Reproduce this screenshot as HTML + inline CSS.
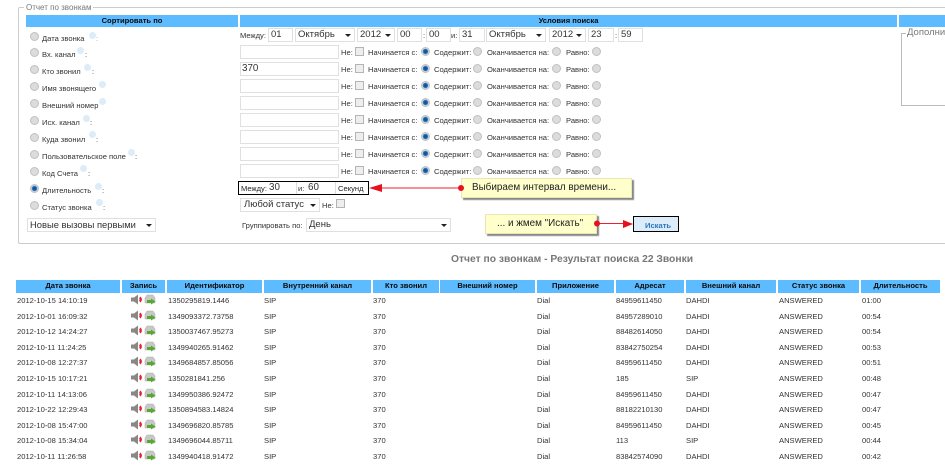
<!DOCTYPE html>
<html><head><meta charset="utf-8"><style>
html,body{margin:0;padding:0;background:#fff}
body{width:945px;height:465px;position:relative;overflow:hidden;font-family:"Liberation Sans",sans-serif;font-size:7.6px;color:#333}
#w{position:absolute;left:0;top:0;width:945px;height:465px;filter:blur(.3px)}
.t{position:absolute;line-height:12px;white-space:nowrap}
.h{position:absolute;background:#5cbcff;color:#0a0a0a;font-weight:bold;text-align:center;font-size:7.6px;line-height:12px;height:12px}
.th{height:13px}
.b{position:absolute;background:#fff;border:1px solid #e0e0e0;box-sizing:border-box;font-size:9.5px;line-height:12px;padding-left:2px;color:#333;white-space:nowrap;overflow:hidden}
.s{height:14px}
.s:after{content:"";position:absolute;right:3px;top:5px;border:3px solid transparent;border-top:3px solid #222;border-bottom:0}
.r{position:absolute;width:7px;height:7px;border-radius:50%;border:1px solid #c0c0c0;background:#dcdcdc;box-sizing:content-box}
.on{background:radial-gradient(circle,#0a4a90 0,#1a66b0 42%,#d0dbe6 62%)}
.c{position:absolute;width:7px;height:7px;border:1px solid #b4b4b4;background:#eee}
.i{position:absolute;width:7px;height:7px;border-radius:50%;background:#dcecf9}
.m{position:absolute}
svg.m[width="26"]{margin-top:-1px}
</style></head><body><div id="w">
<div class="m" style="left:18px;top:7px;width:940px;height:235px;border:1px solid #ccc;border-radius:2px"></div>
<div class="t" style="left:24px;top:2px;background:#fff;padding:0 2px;color:#777;font-size:8px">Отчет по звонкам</div>

<div class="h" style="left:26px;top:15px;width:212px">Сортировать по</div>
<div class="h" style="left:240px;top:15px;width:657px">Условия поиска</div>
<div class="h" style="left:899px;top:15px;width:46px"></div>

<div class="m" style="left:901px;top:33px;width:60px;height:71px;border:1px solid #bbb"></div>
<div class="t" style="left:906px;top:27px;background:#fff;padding:0 1px;color:#777;font-size:9.500px">Дополнит</div>

<i class="r" style="left:30px;top:32px"></i><div class="t" style="left:42px;top:32.500px">Дата звонка</div><i class="i" style="left:88.500px;top:31.500px"></i><div class="t" style="left:96px;top:33px;color:#b88">:</div>
<i class="r" style="left:30px;top:48px"></i><div class="t" style="left:42px;top:48.500px">Вх. канал</div><i class="i" style="left:76.500px;top:46.500px"></i><div class="t" style="left:85px;top:49px">:</div>
<i class="r" style="left:30px;top:65px"></i><div class="t" style="left:42px;top:65.500px">Кто звонил</div><i class="i" style="left:83.500px;top:63.500px"></i><div class="t" style="left:92px;top:66px">:</div>
<i class="r" style="left:30px;top:82px"></i><div class="t" style="left:42px;top:82.500px">Имя звонящего</div><i class="i" style="left:98.500px;top:80.500px"></i>
<i class="r" style="left:30px;top:99px"></i><div class="t" style="left:42px;top:99.500px">Внешний номер</div><i class="i" style="left:98.500px;top:97.500px"></i>
<i class="r" style="left:30px;top:116px"></i><div class="t" style="left:42px;top:116.500px">Исх. канал</div><i class="i" style="left:82.500px;top:114.500px"></i><div class="t" style="left:90px;top:117px">:</div>
<i class="r" style="left:30px;top:133px"></i><div class="t" style="left:42px;top:133.500px">Куда звонил</div><i class="i" style="left:88.500px;top:130.500px"></i><div class="t" style="left:96px;top:134px">:</div>
<i class="r" style="left:30px;top:150px"></i><div class="t" style="left:42px;top:151px">Пользовательское поле</div><i class="i" style="left:127.500px;top:148.500px"></i><div class="t" style="left:135px;top:151px">:</div>
<i class="r" style="left:30px;top:167px"></i><div class="t" style="left:42px;top:167.500px">Код Счета</div><i class="i" style="left:79.500px;top:164.500px"></i><div class="t" style="left:88px;top:168px">:</div>
<i class="r on" style="left:30px;top:184px"></i><div class="t" style="left:42px;top:185px">Длительность</div><i class="i" style="left:94.500px;top:182.500px"></i><div class="t" style="left:102px;top:185px">:</div>
<i class="r" style="left:30px;top:201px"></i><div class="t" style="left:42px;top:201.500px">Статус звонка</div><i class="i" style="left:95.500px;top:198.500px"></i><div class="t" style="left:103px;top:202px">:</div>

<!-- date row -->
<div class="t" style="left:240px;top:30px">Между:</div>
<div class="b" style="left:268px;top:28px;width:25px;height:14px">01</div>
<div class="b s" style="left:295px;top:28px;width:60px">Октябрь</div>
<div class="b s" style="left:357px;top:28px;width:38px">2012</div>
<div class="b" style="left:397px;top:28px;width:25px;height:14px">00</div>
<div class="t" style="left:423px;top:30px">:</div>
<div class="b" style="left:426px;top:28px;width:25px;height:14px">00</div>
<div class="t" style="left:451px;top:30px">и:</div>
<div class="b" style="left:459px;top:28px;width:26px;height:14px">31</div>
<div class="b s" style="left:486px;top:28px;width:60px">Октябрь</div>
<div class="b s" style="left:549px;top:28px;width:37px">2012</div>
<div class="b" style="left:588px;top:28px;width:26px;height:14px">23</div>
<div class="t" style="left:615px;top:30px">:</div>
<div class="b" style="left:618px;top:28px;width:25px;height:14px">59</div>

<!-- inputs -->
<div class="b" style="left:240px;top:45px;width:99px;height:14px"></div>
<div class="b" style="left:240px;top:62px;width:99px;height:14px;padding-left:1px;font-size:9.800px">370</div>
<div class="b" style="left:240px;top:79px;width:99px;height:14px"></div>
<div class="b" style="left:240px;top:96px;width:99px;height:14px"></div>
<div class="b" style="left:240px;top:113px;width:99px;height:14px"></div>
<div class="b" style="left:240px;top:130px;width:99px;height:14px"></div>
<div class="b" style="left:240px;top:147px;width:99px;height:14px"></div>
<div class="b" style="left:240px;top:164px;width:99px;height:14px"></div>

<!-- option rows -->
<div class="t" style="left:341px;top:47px">Не:</div><i class="c" style="left:355px;top:47px"></i><div class="t" style="left:368px;top:47px">Начинается с:</div><i class="r on" style="left:421px;top:47px"></i><div class="t" style="left:434px;top:47px">Содержит:</div><i class="r" style="left:473px;top:47px"></i><div class="t" style="left:487px;top:47px">Оканчивается на:</div><i class="r" style="left:552px;top:47px"></i><div class="t" style="left:566px;top:47px">Равно:</div><i class="r" style="left:592px;top:47px"></i>
<div class="t" style="left:341px;top:64px">Не:</div><i class="c" style="left:355px;top:64px"></i><div class="t" style="left:368px;top:64px">Начинается с:</div><i class="r on" style="left:421px;top:64px"></i><div class="t" style="left:434px;top:64px">Содержит:</div><i class="r" style="left:473px;top:64px"></i><div class="t" style="left:487px;top:64px">Оканчивается на:</div><i class="r" style="left:552px;top:64px"></i><div class="t" style="left:566px;top:64px">Равно:</div><i class="r" style="left:592px;top:64px"></i>
<div class="t" style="left:341px;top:81px">Не:</div><i class="c" style="left:355px;top:81px"></i><div class="t" style="left:368px;top:81px">Начинается с:</div><i class="r on" style="left:421px;top:81px"></i><div class="t" style="left:434px;top:81px">Содержит:</div><i class="r" style="left:473px;top:81px"></i><div class="t" style="left:487px;top:81px">Оканчивается на:</div><i class="r" style="left:552px;top:81px"></i><div class="t" style="left:566px;top:81px">Равно:</div><i class="r" style="left:592px;top:81px"></i>
<div class="t" style="left:341px;top:98px">Не:</div><i class="c" style="left:355px;top:98px"></i><div class="t" style="left:368px;top:98px">Начинается с:</div><i class="r on" style="left:421px;top:98px"></i><div class="t" style="left:434px;top:98px">Содержит:</div><i class="r" style="left:473px;top:98px"></i><div class="t" style="left:487px;top:98px">Оканчивается на:</div><i class="r" style="left:552px;top:98px"></i><div class="t" style="left:566px;top:98px">Равно:</div><i class="r" style="left:592px;top:98px"></i>
<div class="t" style="left:341px;top:115px">Не:</div><i class="c" style="left:355px;top:115px"></i><div class="t" style="left:368px;top:115px">Начинается с:</div><i class="r on" style="left:421px;top:115px"></i><div class="t" style="left:434px;top:115px">Содержит:</div><i class="r" style="left:473px;top:115px"></i><div class="t" style="left:487px;top:115px">Оканчивается на:</div><i class="r" style="left:552px;top:115px"></i><div class="t" style="left:566px;top:115px">Равно:</div><i class="r" style="left:592px;top:115px"></i>
<div class="t" style="left:341px;top:132px">Не:</div><i class="c" style="left:355px;top:132px"></i><div class="t" style="left:368px;top:132px">Начинается с:</div><i class="r on" style="left:421px;top:132px"></i><div class="t" style="left:434px;top:132px">Содержит:</div><i class="r" style="left:473px;top:132px"></i><div class="t" style="left:487px;top:132px">Оканчивается на:</div><i class="r" style="left:552px;top:132px"></i><div class="t" style="left:566px;top:132px">Равно:</div><i class="r" style="left:592px;top:132px"></i>
<div class="t" style="left:341px;top:149px">Не:</div><i class="c" style="left:355px;top:149px"></i><div class="t" style="left:368px;top:149px">Начинается с:</div><i class="r on" style="left:421px;top:149px"></i><div class="t" style="left:434px;top:149px">Содержит:</div><i class="r" style="left:473px;top:149px"></i><div class="t" style="left:487px;top:149px">Оканчивается на:</div><i class="r" style="left:552px;top:149px"></i><div class="t" style="left:566px;top:149px">Равно:</div><i class="r" style="left:592px;top:149px"></i>
<div class="t" style="left:341px;top:166px">Не:</div><i class="c" style="left:355px;top:166px"></i><div class="t" style="left:368px;top:166px">Начинается с:</div><i class="r on" style="left:421px;top:166px"></i><div class="t" style="left:434px;top:166px">Содержит:</div><i class="r" style="left:473px;top:166px"></i><div class="t" style="left:487px;top:166px">Оканчивается на:</div><i class="r" style="left:552px;top:166px"></i><div class="t" style="left:566px;top:166px">Равно:</div><i class="r" style="left:592px;top:166px"></i>

<!-- duration -->
<div class="m" style="left:238px;top:181px;width:129px;height:12px;border:1.500px solid #000"></div>
<div class="t" style="left:241px;top:183px;color:#222">Между:</div>
<div class="t" style="left:269px;top:182px;font-size:9.800px">30</div>
<div class="t" style="left:298px;top:183px">и:</div>
<div class="t" style="left:308px;top:182px;font-size:9.800px">60</div>
<div class="t" style="left:338px;top:183px;color:#222">Секунд</div>
<div class="m" style="left:296px;top:182px;width:1px;height:12px;background:#ddd"></div>
<div class="m" style="left:335px;top:182px;width:1px;height:12px;background:#ddd"></div>

<!-- status -->
<div class="b s" style="left:240px;top:198px;width:80px;font-size:9.500px;padding-left:3px">Любой статус</div>
<div class="t" style="left:322px;top:200px">Не:</div><i class="c" style="left:336px;top:199px"></i>
<div class="b s" style="left:27px;top:218px;width:129px;font-size:9.400px;padding-left:2px">Новые вызовы первыми</div>
<div class="t" style="left:242px;top:220px">Группировать по:</div>
<div class="b s" style="left:306px;top:218px;width:145px;font-size:9.500px;padding-left:2px">День</div>

<!-- callouts -->
<div class="m" style="left:461px;top:178px;width:171px;height:20px;background:#ffffcc;box-shadow:2px 2px 1px #888;border:1px solid #e8e8b0;box-sizing:border-box"></div>
<div class="t" style="left:472px;top:182px;font-size:9.900px;color:#222">Выбираем интервал времени...</div>
<div class="m" style="left:485px;top:214px;width:112px;height:20px;background:#ffffcc;box-shadow:2px 2px 1px #888;border:1px solid #e8e8b0;box-sizing:border-box"></div>
<div class="t" style="left:497px;top:218px;font-size:9.900px;color:#222">... и жмем "Искать"</div>
<div class="m" style="left:633px;top:216px;width:44px;height:14px;border:1.500px solid #000;background:#dcedf9"></div>
<div class="t" style="left:645px;top:219.500px;color:#2a78c0;font-weight:bold;font-size:7.600px">Искать</div>
<svg class="m" style="left:360px;top:175px" width="290" height="60" viewBox="360 175 290 60">
<path d="M378 188H461" stroke="#ee2030" stroke-width="1"/><path d="M369 188L382 184V192Z" fill="#e8101c"/><circle cx="461" cy="188" r="3" fill="#e8101c"/>
<path d="M597 223.500H625" stroke="#ee2030" stroke-width="1"/><path d="M633 224L623 220V228Z" fill="#e8101c"/><circle cx="597" cy="223.500" r="3" fill="#e8101c"/>
</svg>

<div class="t" style="left:451px;top:254px;font-size:10.300px;font-weight:bold;color:#777">Отчет по звонкам - Результат поиска 22 Звонки</div>

<!-- table head -->
<div class="h th" style="left:16px;top:280px;width:104px">Дата звонка</div>
<div class="h th" style="left:122px;top:280px;width:43px">Запись</div>
<div class="h th" style="left:167px;top:280px;width:95px">Идентификатор</div>
<div class="h th" style="left:264px;top:280px;width:107px">Внутренний канал</div>
<div class="h th" style="left:373px;top:280px;width:66px">Кто звонил</div>
<div class="h th" style="left:440px;top:280px;width:95px">Внешний номер</div>
<div class="h th" style="left:537px;top:280px;width:77px">Приложение</div>
<div class="h th" style="left:616px;top:280px;width:68px">Адресат</div>
<div class="h th" style="left:686px;top:280px;width:90px">Внешний канал</div>
<div class="h th" style="left:778px;top:280px;width:81px">Статус звонка</div>
<div class="h th" style="left:861px;top:280px;width:79px">Длительность</div>

<svg width="0" height="0" style="position:absolute"><symbol id="ic" viewBox="0 0 26 12"><path d="M0 3.500H3L7 0.500V10.500L3 7.500H0Z" fill="#888"/><path d="M9 3Q11.500 5.500 9 8M8.500 4Q10 5.500 8.500 7" stroke="#e8202c" stroke-width="1.300" fill="none"/><path d="M14 4L16 1H22L24 4V9H14Z" fill="#c8c8c8" stroke="#aaa" stroke-width=".5"/><path d="M16 6H20V4.500L24.500 7.500L20 10.500V9H16Z" fill="#5aa832"/></symbol></svg>

<div class="t" style="left:17px;top:295px">2012-10-15 14:10:19</div><svg class="m" style="left:131px;top:295px" width="26" height="12"><use href="#ic"/></svg><div class="t" style="left:168px;top:295px">1350295819.1446</div><div class="t" style="left:264px;top:295px">SIP</div><div class="t" style="left:373px;top:295px">370</div><div class="t" style="left:537px;top:295px">Dial</div><div class="t" style="left:616px;top:295px">84959611450</div><div class="t" style="left:686px;top:295px">DAHDI</div><div class="t" style="left:779px;top:295px">ANSWERED</div><div class="t" style="left:862px;top:295px">01:00</div>
<div class="t" style="left:17px;top:311px">2012-10-01 16:09:32</div><svg class="m" style="left:131px;top:311px" width="26" height="12"><use href="#ic"/></svg><div class="t" style="left:168px;top:311px">1349093372.73758</div><div class="t" style="left:264px;top:311px">SIP</div><div class="t" style="left:373px;top:311px">370</div><div class="t" style="left:537px;top:311px">Dial</div><div class="t" style="left:616px;top:311px">84957289010</div><div class="t" style="left:686px;top:311px">DAHDI</div><div class="t" style="left:779px;top:311px">ANSWERED</div><div class="t" style="left:862px;top:311px">00:54</div>
<div class="t" style="left:17px;top:326px">2012-10-12 14:24:27</div><svg class="m" style="left:131px;top:326px" width="26" height="12"><use href="#ic"/></svg><div class="t" style="left:168px;top:326px">1350037467.95273</div><div class="t" style="left:264px;top:326px">SIP</div><div class="t" style="left:373px;top:326px">370</div><div class="t" style="left:537px;top:326px">Dial</div><div class="t" style="left:616px;top:326px">88482614050</div><div class="t" style="left:686px;top:326px">DAHDI</div><div class="t" style="left:779px;top:326px">ANSWERED</div><div class="t" style="left:862px;top:326px">00:54</div>
<div class="t" style="left:17px;top:342px">2012-10-11 11:24:25</div><svg class="m" style="left:131px;top:342px" width="26" height="12"><use href="#ic"/></svg><div class="t" style="left:168px;top:342px">1349940265.91462</div><div class="t" style="left:264px;top:342px">SIP</div><div class="t" style="left:373px;top:342px">370</div><div class="t" style="left:537px;top:342px">Dial</div><div class="t" style="left:616px;top:342px">83842750254</div><div class="t" style="left:686px;top:342px">DAHDI</div><div class="t" style="left:779px;top:342px">ANSWERED</div><div class="t" style="left:862px;top:342px">00:53</div>
<div class="t" style="left:17px;top:357px">2012-10-08 12:27:37</div><svg class="m" style="left:131px;top:357px" width="26" height="12"><use href="#ic"/></svg><div class="t" style="left:168px;top:357px">1349684857.85056</div><div class="t" style="left:264px;top:357px">SIP</div><div class="t" style="left:373px;top:357px">370</div><div class="t" style="left:537px;top:357px">Dial</div><div class="t" style="left:616px;top:357px">84959611450</div><div class="t" style="left:686px;top:357px">DAHDI</div><div class="t" style="left:779px;top:357px">ANSWERED</div><div class="t" style="left:862px;top:357px">00:51</div>
<div class="t" style="left:17px;top:373px">2012-10-15 10:17:21</div><svg class="m" style="left:131px;top:373px" width="26" height="12"><use href="#ic"/></svg><div class="t" style="left:168px;top:373px">1350281841.256</div><div class="t" style="left:264px;top:373px">SIP</div><div class="t" style="left:373px;top:373px">370</div><div class="t" style="left:537px;top:373px">Dial</div><div class="t" style="left:616px;top:373px">185</div><div class="t" style="left:686px;top:373px">SIP</div><div class="t" style="left:779px;top:373px">ANSWERED</div><div class="t" style="left:862px;top:373px">00:48</div>
<div class="t" style="left:17px;top:389px">2012-10-11 14:13:06</div><svg class="m" style="left:131px;top:389px" width="26" height="12"><use href="#ic"/></svg><div class="t" style="left:168px;top:389px">1349950386.92472</div><div class="t" style="left:264px;top:389px">SIP</div><div class="t" style="left:373px;top:389px">370</div><div class="t" style="left:537px;top:389px">Dial</div><div class="t" style="left:616px;top:389px">84959611450</div><div class="t" style="left:686px;top:389px">DAHDI</div><div class="t" style="left:779px;top:389px">ANSWERED</div><div class="t" style="left:862px;top:389px">00:47</div>
<div class="t" style="left:17px;top:404px">2012-10-22 12:29:43</div><svg class="m" style="left:131px;top:404px" width="26" height="12"><use href="#ic"/></svg><div class="t" style="left:168px;top:404px">1350894583.14824</div><div class="t" style="left:264px;top:404px">SIP</div><div class="t" style="left:373px;top:404px">370</div><div class="t" style="left:537px;top:404px">Dial</div><div class="t" style="left:616px;top:404px">88182210130</div><div class="t" style="left:686px;top:404px">DAHDI</div><div class="t" style="left:779px;top:404px">ANSWERED</div><div class="t" style="left:862px;top:404px">00:47</div>
<div class="t" style="left:17px;top:420px">2012-10-08 15:47:00</div><svg class="m" style="left:131px;top:420px" width="26" height="12"><use href="#ic"/></svg><div class="t" style="left:168px;top:420px">1349696820.85785</div><div class="t" style="left:264px;top:420px">SIP</div><div class="t" style="left:373px;top:420px">370</div><div class="t" style="left:537px;top:420px">Dial</div><div class="t" style="left:616px;top:420px">84959611450</div><div class="t" style="left:686px;top:420px">DAHDI</div><div class="t" style="left:779px;top:420px">ANSWERED</div><div class="t" style="left:862px;top:420px">00:45</div>
<div class="t" style="left:17px;top:435px">2012-10-08 15:34:04</div><svg class="m" style="left:131px;top:435px" width="26" height="12"><use href="#ic"/></svg><div class="t" style="left:168px;top:435px">1349696044.85711</div><div class="t" style="left:264px;top:435px">SIP</div><div class="t" style="left:373px;top:435px">370</div><div class="t" style="left:537px;top:435px">Dial</div><div class="t" style="left:616px;top:435px">113</div><div class="t" style="left:686px;top:435px">SIP</div><div class="t" style="left:779px;top:435px">ANSWERED</div><div class="t" style="left:862px;top:435px">00:44</div>
<div class="t" style="left:17px;top:451px">2012-10-11 11:26:58</div><svg class="m" style="left:131px;top:451px" width="26" height="12"><use href="#ic"/></svg><div class="t" style="left:168px;top:451px">1349940418.91472</div><div class="t" style="left:264px;top:451px">SIP</div><div class="t" style="left:373px;top:451px">370</div><div class="t" style="left:537px;top:451px">Dial</div><div class="t" style="left:616px;top:451px">83842574090</div><div class="t" style="left:686px;top:451px">DAHDI</div><div class="t" style="left:779px;top:451px">ANSWERED</div><div class="t" style="left:862px;top:451px">00:42</div>
</div></body></html>
